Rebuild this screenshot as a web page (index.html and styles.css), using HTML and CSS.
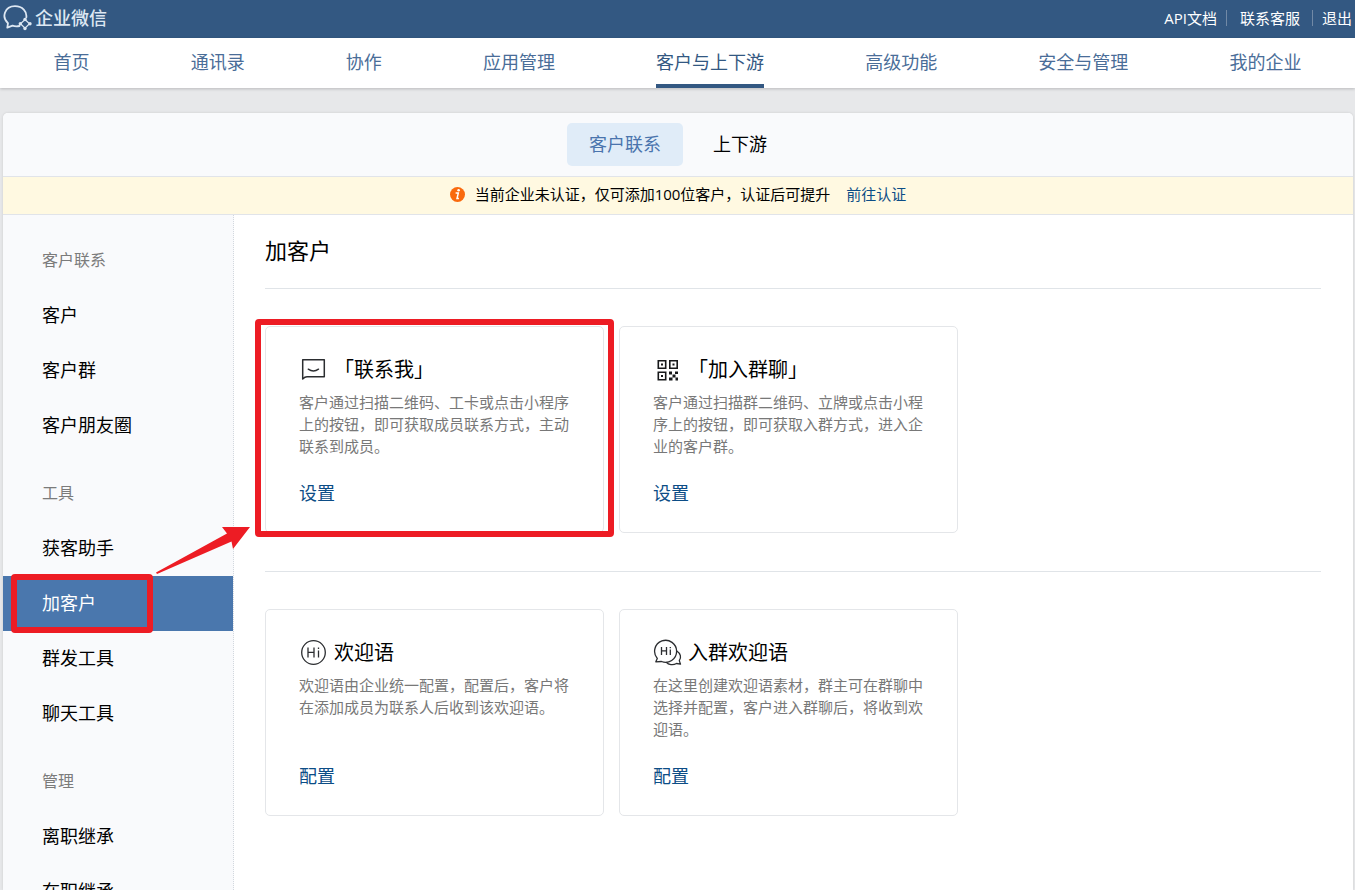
FILE: index.html
```html
<!DOCTYPE html>
<html lang="zh-CN">
<head>
<meta charset="utf-8">
<meta name="viewport" content="width=device-width, initial-scale=1">
<title>企业微信</title>
<link rel="stylesheet" href="styles.css">
</head>
<body>
<div class="app">
  <header class="topbar">
    <a class="logo" href="#">
      <svg class="logo-mark" viewBox="0 0 30 26" aria-hidden="true" fill="none" stroke="currentColor">
        <path d="M16.500 21 C14 21.500 11.500 21.400 9.500 20.600 L4.300 22.600 L5 18.200 C-1.800 12.300 1.600 1.200 12 1.200 C19.500 1.200 24.200 6.500 23.300 12.500" stroke-width="1.800" stroke-linejoin="round" stroke-linecap="round"/>
        <path d="M22 14.500 L26.500 18.800 L22 23.200 L17.500 18.800 Z" stroke-width="1.200"/>
        <g fill="currentColor" stroke="none">
          <circle cx="22" cy="14.500" r="1.700"/><circle cx="27" cy="18.800" r="1.700"/>
          <circle cx="22" cy="23.500" r="1.700"/><circle cx="17.300" cy="18.800" r="1.700"/>
        </g>
      </svg>
      <span>企业微信</span>
    </a>
    <nav class="toplinks">
      <a href="#">API文档</a>
      <a href="#">联系客服</a>
      <a href="#">退出</a>
    </nav>
  </header>

  <nav class="mainnav">
    <a href="#">首页</a>
    <a href="#">通讯录</a>
    <a href="#">协作</a>
    <a href="#">应用管理</a>
    <a class="active" href="#">客户与上下游</a>
    <a href="#">高级功能</a>
    <a href="#">安全与管理</a>
    <a href="#">我的企业</a>
  </nav>

  <div class="panel">
    <div class="tabs">
      <button class="tab tab-active" type="button">客户联系</button>
      <button class="tab" type="button">上下游</button>
    </div>

    <div class="notice">
      <svg class="notice-icon" viewBox="0 0 15 15" aria-hidden="true">
        <circle cx="7.500" cy="7.500" r="7.500" fill="#f96a0e"/>
        <circle cx="8.600" cy="3.300" r="1.300" fill="#fff"/>
        <path d="M5.600 6.100 H8.300 L7 11.600 H8.900" fill="none" stroke="#fff" stroke-width="1.500"/>
      </svg>
      <span>当前企业未认证，仅可添加100位客户，认证后可提升</span>
      <a href="#">前往认证</a>
    </div>

    <div class="body">
      <aside class="sidebar">
        <h2>客户联系</h2>
        <a href="#">客户</a>
        <a href="#">客户群</a>
        <a href="#">客户朋友圈</a>
        <h2>工具</h2>
        <a href="#">获客助手</a>
        <a class="current" href="#">加客户<span class="mark mark-menu"></span></a>
        <a href="#">群发工具</a>
        <a href="#">聊天工具</a>
        <h2>管理</h2>
        <a href="#">离职继承</a>
        <a href="#">在职继承</a>
      </aside>

      <main class="content">
        <h1>加客户</h1>
        <section class="cards">
          <article class="card">
            <h3>
              <svg class="icon" viewBox="0 0 30 30" aria-hidden="true" fill="none" stroke="#2b2d30" stroke-width="1.500" stroke-linejoin="round" stroke-linecap="round">
                <path d="M3.700 4.800 H25.300 V21.800 H8 C6 21.800 4.800 22.900 3.700 24 Z"/>
                <path d="M9.300 14.200 C12.300 16.200 16.500 16.200 19.500 14.200"/>
              </svg>
              <span>「联系我」</span>
            </h3>
            <p>客户通过扫描二维码、工卡或点击小程序上的按钮，即可获取成员联系方式，主动联系到成员。</p>
            <a href="#">设置</a>
            <span class="mark mark-card"></span>
            <svg class="mark-arrow" viewBox="0 0 96 50" aria-hidden="true">
              <path d="M95 2 L67 2 L72 8.500 L1 47.500 L2 49 L76.500 16.500 L78 24 Z" fill="#ed1c24"/>
            </svg>
          </article>
          <article class="card">
            <h3>
              <svg class="icon" viewBox="0 0 30 30" aria-hidden="true" fill="none" stroke="#17181a" stroke-width="1.600">
                <path d="M5.300 5.800 h7.400 v7.400 h-7.400 z M16.800 5.800 h7.400 v7.400 h-7.400 z M5.300 17.300 h7.400 v7.400 h-7.400 z"/>
                <path d="M8 8.500 h2 v2 h-2 z M19.500 8.500 h2 v2 h-2 z M8 20 h2 v2 h-2 z M16 16.500 h3 v3 h-3 z M22 16.500 h3 v2.500 h-3 z M19.500 19.500 h3 v3 h-3 z M16 22.500 h3.500 v3 h-3.500 z M22.500 22.500 h2.500 v3 h-2.500 z" fill="#17181a" stroke="none"/>
              </svg>
              <span>「加入群聊」</span>
            </h3>
            <p>客户通过扫描群二维码、立牌或点击小程序上的按钮，即可获取入群方式，进入企业的客户群。</p>
            <a href="#">设置</a>
          </article>
        </section>
        <section class="cards">
          <article class="card">
            <h3>
              <svg class="icon" viewBox="0 0 30 30" aria-hidden="true" fill="none" stroke="#2b2d30" stroke-width="1.300">
                <circle cx="14.500" cy="14.500" r="11.800"/>
                <path d="M9 9.500 V19.500 M15 9.500 V19.500 M9 14.300 H15 M19.500 12.500 V19.500 M19.500 9.500 V11"/>
              </svg>
              <span>欢迎语</span>
            </h3>
            <p>欢迎语由企业统一配置，配置后，客户将在添加成员为联系人后收到该欢迎语。</p>
            <a href="#">配置</a>
          </article>
          <article class="card">
            <h3>
              <svg class="icon" viewBox="0 0 30 30" aria-hidden="true" fill="none" stroke="#2b2d30" stroke-width="1.300" stroke-linejoin="round">
                <path d="M4.300 20.500 A11 11 0 1 1 8.500 23.500 L2.800 23.800 Z"/>
                <path d="M23.800 13 C27.800 15.500 28.500 19.500 26.300 22.600 L27.500 26.200 L23.500 25.500 C20 27.500 15.500 26.800 13.300 24.300"/>
                <path d="M8.500 9 V17 M13.500 9 V17 M8.500 12.800 H13.500 M17.300 11.500 V17 M17.300 9 V10.300"/>
              </svg>
              <span>入群欢迎语</span>
            </h3>
            <p>在这里创建欢迎语素材，群主可在群聊中选择并配置，客户进入群聊后，将收到欢迎语。</p>
            <a href="#">配置</a>
          </article>
        </section>
      </main>
    </div>
  </div>
</div>
</body>
</html>
```

FILE: styles.css
```css
* { box-sizing: border-box; }

body {
  margin: 0;
  background: #e7e8ea;
  color: #000;
  font-family: "Open Sans", "Noto Sans CJK SC", sans-serif;
  font-size: 18px;
  font-weight: 400;
}

a { color: #0c4d86; text-decoration: none; }
h1, h2, h3, p { margin: 0; font-weight: inherit; }

.app {
  display: flex;
  flex-direction: column;
  height: 100vh;
}

/* Top bar */
.topbar {
  flex: none;
  display: flex;
  align-items: center;
  justify-content: space-between;
  height: 38px;
  padding: 0 3px 2px;
  background: #335882;
}
.logo {
  display: flex;
  align-items: center;
  gap: 2px;
  color: #dde7f2;
  font-weight: 500;
  line-height: 36px;
}
.logo-mark { width: 30px; height: 26px; }
.toplinks { display: flex; font-size: 15px; line-height: 16px; }
.toplinks a { color: #fff; }
.toplinks a + a {
  margin-left: 9px;
  padding-left: 13px;
  border-left: 1px solid #7189a6;
}
.toplinks a:last-child { padding-left: 9px; margin-left: 12px; }

/* Main navigation */
.mainnav {
  flex: none;
  display: flex;
  justify-content: space-around;
  height: 50px;
  padding: 0 3px;
  background: #fff;
  box-shadow: 0 1px 3px rgba(0, 0, 0, 0.2);
}
.mainnav a {
  color: #4a6d98;
  line-height: 48px;
  border-bottom: 4px solid transparent;
}
.mainnav .active { color: #335882; border-color: #335882; }

/* Panel */
.panel {
  flex: 1;
  min-height: 0;
  display: flex;
  flex-direction: column;
  margin: 25px 2px 0 3px;
  overflow: hidden;
  background: #fff;
  border-radius: 5px 5px 0 0;
  box-shadow: 0 0 3px rgba(0, 0, 0, 0.12);
}
.tabs {
  flex: none;
  display: flex;
  justify-content: center;
  gap: 8px;
  padding: 10px 0;
  background: #f9fafc;
  border-bottom: 1px solid #e1e4e9;
}
.tab {
  padding: 0 22px 1px;
  border: 0;
  border-radius: 5px;
  background: transparent;
  color: #000;
  font: inherit;
  line-height: 42px;
}
.tab-active { background: #e0ecf8; color: #4a74ad; }

.notice {
  flex: none;
  display: flex;
  align-items: center;
  justify-content: center;
  gap: 10px;
  padding-bottom: 2px;
  border-bottom: 1px solid #e1e4e9;
  background: #fff9e1;
  font-size: 15px;
  line-height: 35px;
}
.notice-icon { width: 15px; height: 15px; }
.notice a { margin-left: 6px; }

.body { flex: 1; min-height: 0; display: flex; }

/* Sidebar */
.sidebar {
  flex: none;
  width: 231px;
  padding-top: 18px;
  overflow: hidden;
  background: #f9fafc;
  border-right: 1px dotted #d3d8de;
}
.sidebar h2,
.sidebar a {
  padding-left: 39px;
  line-height: 55px;
}
.sidebar h2 { color: #7b7b7b; font-size: 16px; }
.sidebar a { display: block; color: #000; }
.sidebar a + h2 { margin-top: 13px; }
.sidebar .current { position: relative; background: #4a77ad; color: #fff; }

/* Content */
.content { flex: 1; min-width: 0; padding: 0 32px 0 31px; }
.content h1 { padding-bottom: 2px; font-size: 22px; line-height: 71px; }
.cards {
  display: grid;
  grid-template-columns: repeat(auto-fill, 339px);
  gap: 15px;
  padding: 37px 0 38px;
  border-top: 1px solid #e0e4e8;
}
.card {
  position: relative;
  padding: 28px 33px 27px;
  border: 1px solid #e4e6e9;
  border-radius: 5px;
}
.card h3 {
  display: flex;
  align-items: center;
  gap: 5px;
  font-size: 20px;
  line-height: 30px;
}
.icon { flex: none; width: 30px; height: 30px; }
.card p {
  min-height: 66px;
  margin: 6px 0 24px;
  color: #787878;
  font-size: 15px;
  line-height: 22px;
}
.card a { display: block; line-height: 24px; }

/* Red call-outs */
.mark {
  position: absolute;
  border: 6px solid #ed1c24;
  border-radius: 4px;
  pointer-events: none;
}
.mark-menu { top: -2px; bottom: -2px; left: 8px; width: 142px; }
.mark-card { top: -8px; right: -11px; bottom: -5px; left: -11px; }
.mark-arrow {
  position: absolute;
  top: 198px;
  left: -111px;
  width: 96px;
  height: 50px;
}
```
